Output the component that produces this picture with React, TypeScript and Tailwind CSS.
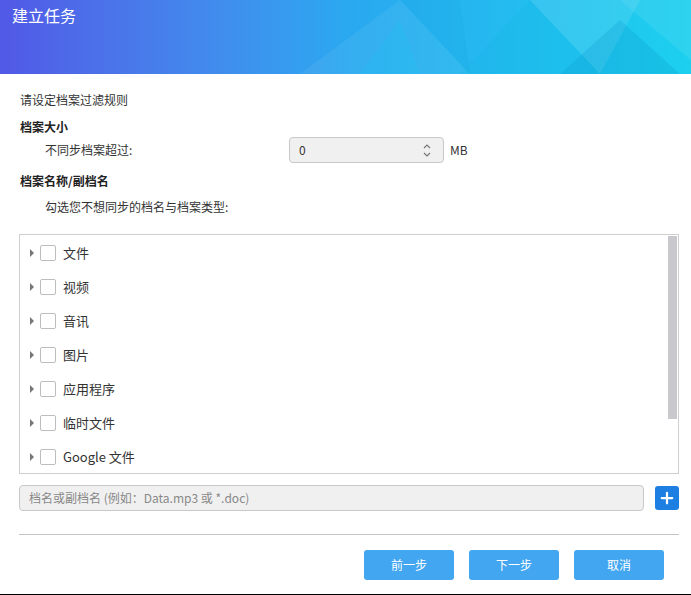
import React, { useState } from 'react';
import { Plus } from 'lucide-react';

const CATEGORIES = ['文件', '视频', '音讯', '图片', '应用程序', '临时文件', 'Google 文件'];

export default function App() {
  const [checked, setChecked] = useState<Record<string, boolean>>({});
  const [size, setSize] = useState(0);

  return (
    <div className="w-[691px] h-[595px] bg-white flex flex-col text-[12px] text-[#333] font-['Noto_Sans_CJK_SC','Noto_Sans',sans-serif] border-b border-black">
      {/* Header */}
      <div className="relative h-[74px] shrink-0 overflow-hidden bg-gradient-to-r from-[#5158e6] via-[#2aa8f0] to-[#1cd0ee]">
        <svg className="absolute inset-0" width="691" height="74" viewBox="0 0 691 74" preserveAspectRatio="none">
          <polygon points="300,74 400,0 470,74" fill="#ffffff" opacity="0.06" />
          <polygon points="400,0 460,0 470,74" fill="#0aa0d8" opacity="0.12" />
          <polygon points="460,74 530,0 600,74" fill="#0ab8e0" opacity="0.18" />
          <polygon points="530,0 600,74 640,0" fill="#ffffff" opacity="0.10" />
          <polygon points="560,74 620,20 680,74" fill="#0590c8" opacity="0.22" />
          <polygon points="620,0 691,0 691,60" fill="#ffffff" opacity="0.08" />
          <polygon points="360,74 400,20 420,74" fill="#0ad0f0" opacity="0.15" />
        </svg>
        <h1 className="relative pl-3 pt-[4px] text-[16px] leading-[22px] text-white">建立任务</h1>
      </div>

      {/* Body */}
      <div className="flex flex-col pl-[19px] pr-[12px] pt-[18px]">
        <p className="pl-[1px] leading-[16px]">请设定档案过滤规则</p>
        <p className="pl-[1px] mt-[11px] leading-[16px] font-semibold text-[#222]">档案大小</p>
        <div className="flex items-center mt-[1px] h-[28px]">
          <span className="pl-[26px] w-[270px]">不同步档案超过:</span>
          <div className="flex items-center w-[155px] h-[26px] rounded-[4px] border border-[#c8c8c8] bg-[#f0f0f0] pl-[9px] pr-[12px]">
            <span className="flex-1">{size}</span>
            <div className="flex flex-col items-center text-[#777] leading-none">
              <svg width="8" height="6" viewBox="0 0 8 6" onClick={() => setSize(size + 1)}>
                <path d="M1 5 L4 2 L7 5" fill="none" stroke="#777" strokeWidth="1.2" />
              </svg>
              <svg width="8" height="6" viewBox="0 0 8 6" className="mt-[3px]" onClick={() => setSize(Math.max(0, size - 1))}>
                <path d="M1 1 L4 4 L7 1" fill="none" stroke="#777" strokeWidth="1.2" />
              </svg>
            </div>
          </div>
          <span className="ml-[6px]">MB</span>
        </div>
        <p className="pl-[1px] mt-[9px] leading-[16px] font-semibold text-[#222]">档案名称/副档名</p>
        <p className="pl-[26px] mt-[10px] leading-[16px]">勾选您不想同步的档名与档案类型:</p>

        {/* Category list */}
        <div className="relative mt-[19px] h-[240px] border border-[#cfcfcf] overflow-hidden">
          <div className="flex flex-col pt-[1px]">
            {CATEGORIES.map((c) => (
              <div key={c} className="flex items-center h-[34px] pl-[10px]">
                <svg width="4" height="8" viewBox="0 0 4 8" className="mr-[6px]">
                  <path d="M0 0 L4 4 L0 8 Z" fill="#777" />
                </svg>
                <button
                  onClick={() => setChecked({ ...checked, [c]: !checked[c] })}
                  className="w-[16px] h-[16px] rounded-[2px] border border-[#bdbdbd] bg-white flex items-center justify-center"
                >
                  {checked[c] && <span className="w-[8px] h-[8px] bg-[#2b8fe6]" />}
                </button>
                <span className="ml-[7px] text-[13px] text-[#333]">{c}</span>
              </div>
            ))}
          </div>
          <div className="absolute right-[1px] top-[1px] w-[9px] h-[183px] bg-[#c9c9cd]" />
        </div>

        {/* Extension input */}
        <div className="flex items-center mt-[11px]">
          <div className="flex-1 h-[26px] rounded-[4px] border border-[#c8c8c8] bg-[#f0f0f0] flex items-center pl-[9px] text-[#888]">
            档名或副档名 (例如：Data.mp3 或 *.doc)
          </div>
          <button className="ml-[11px] w-[24px] h-[24px] rounded-[3px] bg-[#1e7fe2] flex items-center justify-center">
            <Plus size={18} strokeWidth={3} color="#ffffff" />
          </button>
        </div>

        <div className="mt-[23px] h-px bg-[#c4c4c4]" />

        {/* Footer buttons */}
        <div className="flex justify-end gap-[15px] mt-[15px] pr-[15px]">
          {['前一步', '下一步', '取消'].map((b) => (
            <button key={b} className="w-[90px] h-[30px] rounded-[3px] bg-[#42a6f0] text-white text-[12px]">
              {b}
            </button>
          ))}
        </div>
      </div>
    </div>
  );
}
